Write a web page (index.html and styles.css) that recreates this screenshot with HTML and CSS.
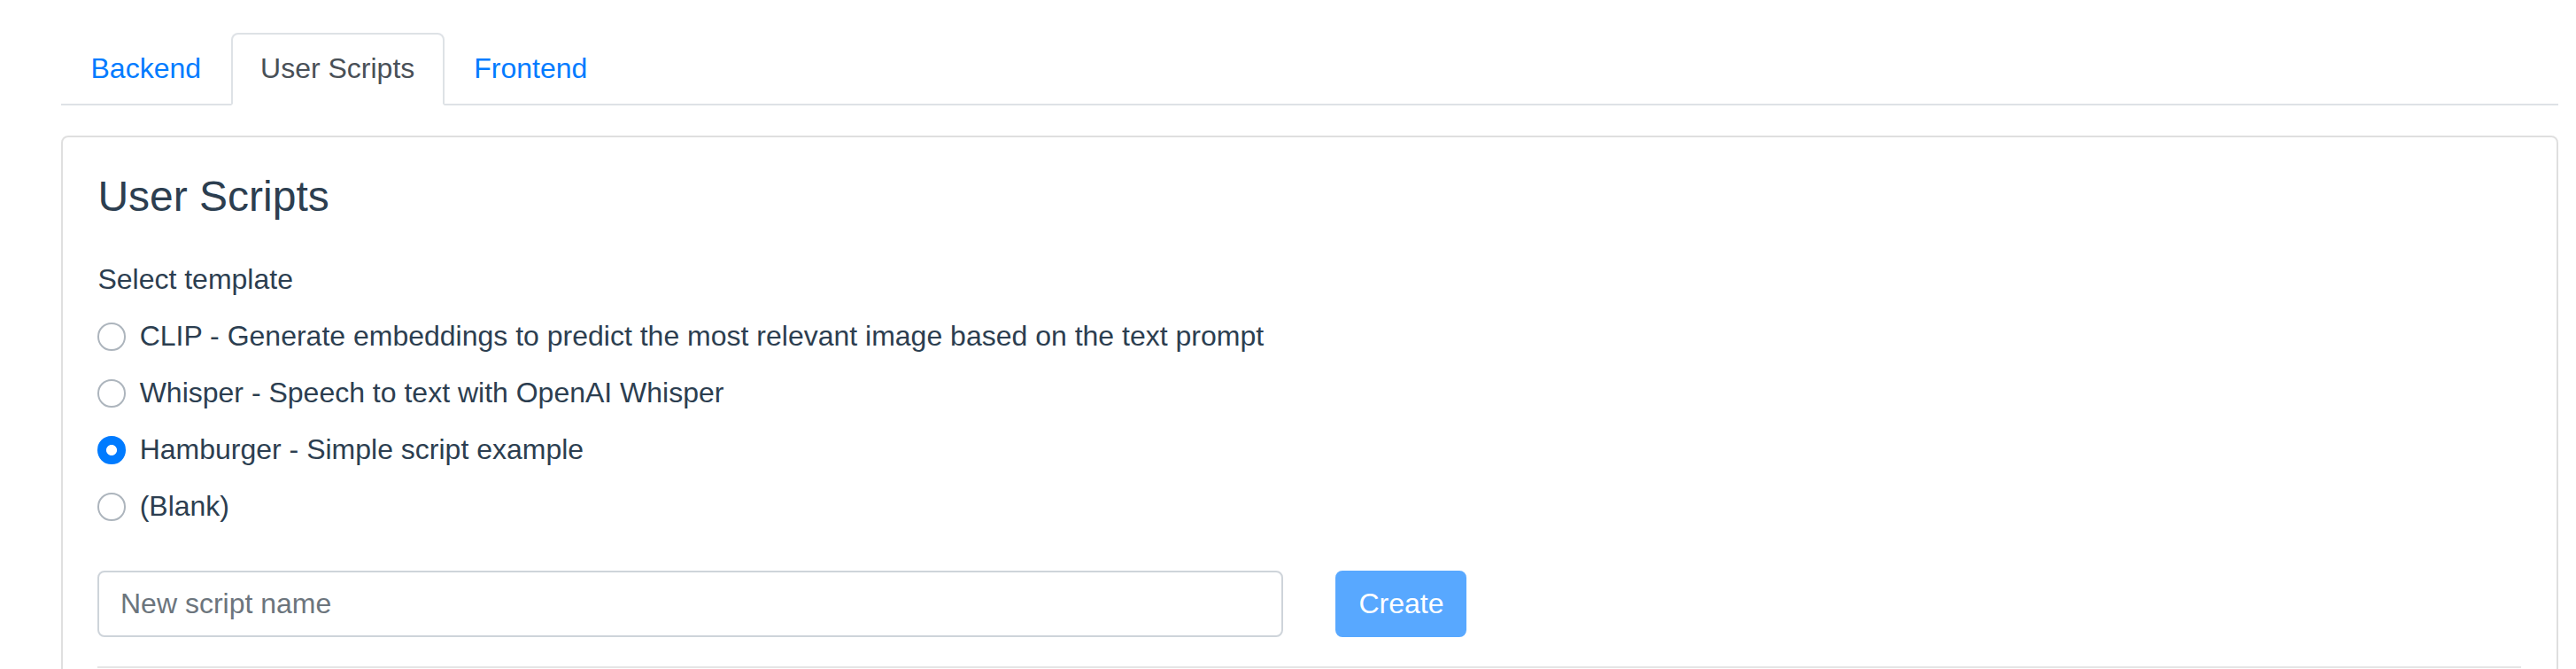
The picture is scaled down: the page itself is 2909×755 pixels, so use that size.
FILE: index.html
```html
<!DOCTYPE html>
<html lang="en">
<head>
<meta charset="utf-8">
<title>User Scripts</title>
<link rel="stylesheet" href="styles.css">
</head>
<body>
<div class="page">
  <ul class="tabs">
    <li><a class="tab" href="#">Backend</a></li>
    <li><a class="tab active" href="#">User Scripts</a></li>
    <li><a class="tab" href="#">Frontend</a></li>
  </ul>
  <div class="card">
    <h4 class="title">User Scripts</h4>
    <div class="group">
      <div class="field-label">Select template</div>
      <label class="radio"><span class="dot"></span><span class="radio-text">CLIP - Generate embeddings to predict the most relevant image based on the text prompt</span></label>
      <label class="radio"><span class="dot"></span><span class="radio-text">Whisper - Speech to text with OpenAI Whisper</span></label>
      <label class="radio"><span class="dot checked"></span><span class="radio-text">Hamburger - Simple script example</span></label>
      <label class="radio"><span class="dot"></span><span class="radio-text">(Blank)</span></label>
    </div>
    <div class="create-row">
      <input class="name-input" type="text" placeholder="New script name">
      <div><button class="create-btn" type="button" disabled>Create</button></div>
    </div>
    <hr class="divider">
  </div>
</div>
</body>
</html>
```

FILE: styles.css
```css
html, body {
  margin: 0;
  padding: 0;
  background: #fff;
}

body {
  font-family: "Liberation Sans", Arial, Helvetica, sans-serif;
  font-size: 32px;
  line-height: 47.25px;
  color: #2c3e50;
}

.page {
  padding: 36.7px 20.3px 0 69px;
}

.tabs {
  display: flex;
  list-style: none;
  margin: 0;
  padding: 0;
  border-bottom: 2px solid #dee2e6;
}

.tab {
  display: block;
  padding: 15.75px 31.5px;
  border: 2px solid transparent;
  border-radius: 7.9px 7.9px 0 0;
  margin-bottom: -2px;
  color: #007bff;
  text-decoration: none;
}

.tab.active {
  color: #495057;
  background: #fff;
  border-color: #dee2e6 #dee2e6 #fff;
}

.card {
  margin-top: 33.25px;
  border: 2px solid rgba(0, 0, 0, 0.125);
  border-radius: 7.9px;
  padding: 39.4px;
}

.title {
  margin: 0 0 41.4px;
  font-size: 48px;
  font-weight: 500;
  line-height: 56.76px;
}

.group {
  margin-bottom: 48.25px;
}

.field-label {
  margin-bottom: 16.75px;
}

.radio {
  display: flex;
  align-items: flex-start;
  margin-bottom: 16.75px;
}

.dot {
  flex: none;
  box-sizing: border-box;
  width: 31.5px;
  height: 31.5px;
  margin-top: 7.9px;
  margin-right: 15.75px;
  border: 2px solid #adb5bd;
  border-radius: 50%;
  background: #fff;
}

.dot.checked {
  border-color: #007bff;
  background: radial-gradient(circle, #fff 0 5.6px, #007bff 6.4px);
}

.create-row {
  display: grid;
  grid-template-columns: 1fr 1fr;
  column-gap: 59.1px;
}

.name-input {
  box-sizing: border-box;
  width: 100%;
  height: 74.9px;
  padding: 11.8px 23.6px;
  border: 2px solid #ced4da;
  border-radius: 7.9px;
  font-family: inherit;
  font-size: 32px;
  line-height: 47.25px;
  color: #495057;
  background: #fff;
}

.name-input::placeholder {
  color: #6c757d;
  opacity: 1;
}

.create-btn {
  box-sizing: border-box;
  height: 75.5px;
  padding: 11.8px 24px;
  border: 2px solid #007bff;
  border-radius: 7.9px;
  background: #007bff;
  color: #fff;
  font-family: inherit;
  font-size: 32px;
  line-height: 47.25px;
  opacity: 0.65;
}

.divider {
  margin: 32.5px 0 0;
  border: 0;
  border-top: 2px solid rgba(0, 0, 0, 0.1);
}
```
